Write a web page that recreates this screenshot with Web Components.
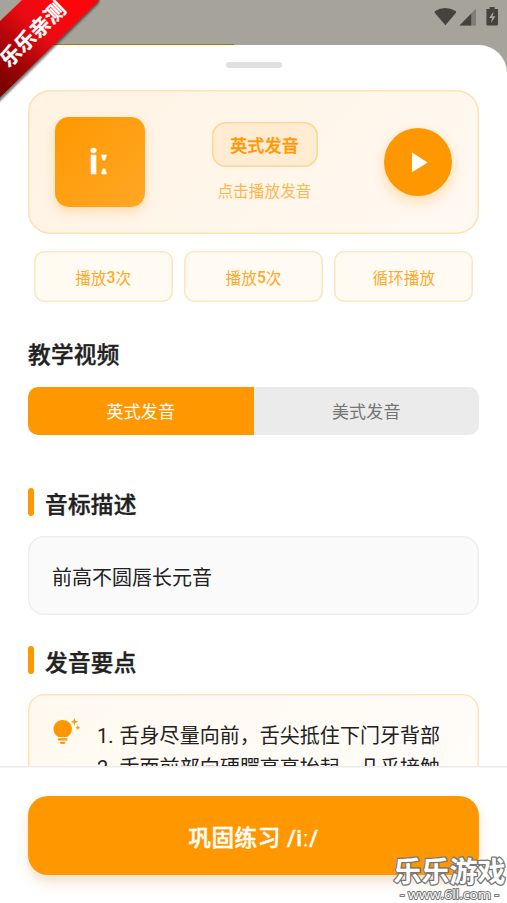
<!DOCTYPE html>
<html lang="zh-CN">
<head>
<meta charset="utf-8">
<title>音标发音</title>
<style>
html,body{margin:0;height:100%;overflow:hidden}
body{font-family:Roboto,"Noto Sans CJK SC",sans-serif;color:#212121;background:#a6a39b}
</style>
</head>
<body>
<phonetic-app></phonetic-app>
<script>
const define = (name, html) => customElements.define(name, class extends HTMLElement {
  constructor() {
    super();
    this.attachShadow({ mode: 'open' }).innerHTML = html;
  }
});

define('status-bar', `
<style>
:host{display:flex;height:45px;box-sizing:border-box;justify-content:flex-end;align-items:flex-start;padding:6px 8px 0 0;background:linear-gradient(#b37109,#b37109) 30px 43.5px/204px 2px no-repeat #a6a39b}
svg{display:block}
</style>
<svg width="66" height="21" viewBox="433 6 66 21">
<path fill="#44433e" d="M434.7 11.2Q445 4.6 456 11.2V12.8L445.4 25.2 434.7 12.8Z"/>
<path fill="#7f7d77" d="M476 8.6V25.5H459.5Z"/><path fill="#44433e" d="M471.2 13.8V25.5H459.5Z"/>
<path fill="#44433e" d="M489.6 7h5v2h3.4v15.2q0 1.2-1.2 1.2h-9.2q-1.2 0-1.2-1.2V9h3.2z"/>
<path fill="#a6a39b" d="M493.5 11.5 489.2 18H492L491 23 495.5 16.3H492.6Z"/>
</svg>`);

define('sound-tile', `
<style>
:host{display:flex;flex:none;box-sizing:border-box;width:90px;height:90px;border-radius:14px;align-items:center;justify-content:center;color:#fff;font:700 35px/1 Roboto,sans-serif;-webkit-text-stroke:.3px;padding-right:1px;background:linear-gradient(135deg,#ff9800,#ffa726);box-shadow:0 5px 12px rgba(255,152,0,.25)}
</style><slot></slot>`);

define('accent-badge', `
<style>
:host{display:flex;box-sizing:border-box;width:106px;height:45px;align-items:center;justify-content:center;box-shadow:inset 0 0 0 1.5px #ffd597;border-radius:14px;background:#ffecd2;color:#ff9800;font-size:17px;font-weight:500;-webkit-text-stroke:.3px;letter-spacing:.15px}
</style><slot></slot>`);

define('play-button', `
<style>
:host{display:flex;flex:none;width:68px;height:68px;border-radius:50%;align-items:center;justify-content:center;background:#ff9800;box-shadow:0 5px 14px rgba(255,152,0,.3)}
</style><svg width="68" height="68" viewBox="0 0 68 68"><path fill="#fff" d="M28 24.6V44.2L43.6 34.4Z"/></svg>`);

define('player-card', `
<style>
:host{display:flex;box-sizing:border-box;height:144px;padding:0 27px;justify-content:space-between;align-items:center;box-shadow:inset 0 0 0 1.6px #ffe1b6;border-radius:22px;background:linear-gradient(135deg,#fff3e3,#fff9f2)}
.info{display:flex;flex-direction:column;align-items:center;gap:13px;padding-top:2px}
.hint{height:24px;line-height:24px;font-size:15.7px;color:#ffb64d}
</style>
<sound-tile><slot name="symbol"></slot></sound-tile>
<div class="info"><accent-badge><slot name="accent"></slot></accent-badge><div class="hint"><slot name="hint"></slot></div></div>
<play-button></play-button>`);

define('repeat-button', `
<style>
:host{display:flex;flex:1;box-sizing:border-box;height:51px;align-items:center;justify-content:center;box-shadow:inset 0 0 0 1.6px #ffe5c2;border-radius:10px;background:#fffaf2;color:#ffa92c;font-size:15.7px;padding-top:1px}
::slotted(b){font-weight:500}
</style><slot></slot>`);

define('tab-item', `
<style>
:host{display:flex;flex:1;box-sizing:border-box;align-items:center;justify-content:center;background:#ebebeb;color:#757575;font-size:17px;letter-spacing:.15px;padding-bottom:1px}
:host([active]){background:#ff9800;color:#fff}
</style><slot></slot>`);

define('tab-strip', `
<style>
:host{display:flex;height:48px;border-radius:10px;overflow:hidden}
</style><slot></slot>`);

define('section-title', `
<style>
:host{display:flex;height:28px;align-items:center;gap:11px;font-size:22.6px;font-weight:500;-webkit-text-stroke:.4px;letter-spacing:.3px;line-height:28px}
:host([marked])::before{content:"";width:6px;height:28px;border-radius:3px;background:#ff9800;flex:none}
span{padding-top:8px}
:host(:not([marked])) span{padding-top:2px}
</style><span><slot></slot></span>`);

define('description-box', `
<style>
:host{display:flex;box-sizing:border-box;height:79px;align-items:center;padding:2px 24px 0;box-shadow:inset 0 0 0 1.5px #eee;border-radius:16px;background:#fafafa;font-size:20px}
</style><slot></slot>`);

define('tips-card', `
<style>
:host{display:flex;box-sizing:border-box;height:180px;padding:23px 20px 0 24px;box-shadow:inset 0 0 0 1.6px #ffe3bc;border-radius:16px;background:linear-gradient(135deg,#fff9f0,#fffdfa);font-size:20px;line-height:32px}
svg{flex:none;width:30px;height:30px;margin-right:15px}
div{padding-top:3px;white-space:nowrap;word-spacing:1px;letter-spacing:.03px}
</style>
<svg viewBox="52 717 30 30"><g fill="#ff9800"><path d="M62.7 720a9 9 0 0 1 4.7 16.8V737H58v-.2A9 9 0 0 1 62.7 720ZM58 738.3h9.4v2.3H58zM59.7 741.7h6q-.4 2.2-2 2.2h-2q-1.6 0-2-2.2zM74.4 718l1 2.7 2.7 1-2.7 1-1 2.8-1-2.8-2.7-1 2.7-1zM77.8 725.3l.8 1.7 1.7.8-1.7.8-.8 1.7-.8-1.7-1.7-.8 1.7-.8z"/></g></svg>
<div><slot></slot></div>`);

define('practice-footer', `
<style>
:host{display:block;box-sizing:border-box;flex:none;height:137px;padding:30px 28px 0;box-shadow:inset 0 1.6px #ebebeb;background:#fff;z-index:1}
button{display:flex;width:100%;height:79px;border:0;border-radius:20px;align-items:center;justify-content:center;padding:6px 0 0;background:#ff9800;color:#fff;font:500 22.6px/30px Roboto,"Noto Sans CJK SC",sans-serif;-webkit-text-stroke:.4px;letter-spacing:.5px;box-shadow:0 7px 14px -2px rgba(190,120,20,.28)}
</style><button><slot></slot></button>`);

define('corner-ribbon', `
<style>
:host{display:block;position:absolute;left:0;top:0;width:106px;height:106px;overflow:hidden}
svg{display:block}
</style>
<svg width="106" height="106" viewBox="0 0 106 106"><defs><linearGradient id="r" gradientUnits="userSpaceOnUse" x1="0" y1="85" x2="75" y2="8"><stop offset="0" stop-color="#7b0000"/><stop offset=".3" stop-color="#a60508"/><stop offset=".62" stop-color="#e90b12"/><stop offset="1" stop-color="#ff050b"/></linearGradient><filter id="s"><feGaussianBlur stdDeviation="1.2"/></filter></defs>
<path filter="url(#s)" fill="#222" opacity=".65" d="M-5 101 99-3V3L-5 106Z"/>
<path fill="url(#r)" d="M22 0H99.5L0 97.5V21Z"/>
<text transform="translate(33 34.5) rotate(-44.5)" text-anchor="middle" y="7" fill="#fff" stroke="#fff" stroke-width=".3" font-family="Noto Sans CJK SC,sans-serif" font-weight="700" font-size="20.5">乐乐亲测</text></svg>`);

define('site-mark', `
<style>
:host{display:block;position:absolute;right:0;bottom:0;width:116px;height:50px;z-index:3}
svg{display:block}
text{fill:#fff;stroke:#777;paint-order:stroke;stroke-linejoin:round}
</style>
<svg width="116" height="50" viewBox="391 853 116 50">
<text x="393.5" y="881.5" font-family="Noto Sans CJK SC,sans-serif" font-weight="700" font-size="28" stroke-width="2.6" textLength="112" lengthAdjust="spacingAndGlyphs">乐乐游戏</text>
<text x="400" y="898.5" font-family="Open Sans,sans-serif" font-size="13.5" font-weight="400" stroke-width="2" textLength="99" lengthAdjust="spacingAndGlyphs">- www.6ll.com -</text></svg>`);

define('bottom-sheet', `
<style>
:host{display:flex;flex-direction:column;flex:1;min-height:0;border-radius:0 28px 0 0;background:#fff;overflow:hidden}
main{flex:1;min-height:0;overflow:hidden;padding:17px 28px 0}
.handle{width:56px;height:6px;border-radius:3px;background:#e0e0e0;margin:0 auto 22px}
.repeats{display:flex;gap:11px;padding:0 5.5px;margin:17px 0 38.5px}
.video{margin-bottom:18px}
tab-strip{margin-bottom:53px}
description-box{margin:20px 0 31px}
tips-card{margin-top:20px}
</style>
<main>
<div class="handle"></div>
<player-card><span slot="symbol">iː</span><span slot="accent">英式发音</span><span slot="hint">点击播放发音</span></player-card>
<div class="repeats"><repeat-button>播放<b>3</b>次</repeat-button><repeat-button>播放<b>5</b>次</repeat-button><repeat-button>循环播放</repeat-button></div>
<section-title class="video">教学视频</section-title>
<tab-strip><tab-item active>英式发音</tab-item><tab-item>美式发音</tab-item></tab-strip>
<section-title marked>音标描述</section-title>
<description-box>前高不圆唇长元音</description-box>
<section-title marked>发音要点</section-title>
<tips-card>1. 舌身尽量向前，舌尖抵住下门牙背部<br>2. 舌面前部向硬腭高高抬起，几乎接触</tips-card>
</main>
<practice-footer>巩固练习 /iː/</practice-footer>`);

define('phonetic-app', `
<style>
:host{display:flex;flex-direction:column;position:relative;height:100vh;overflow:hidden}
</style>
<status-bar></status-bar><bottom-sheet></bottom-sheet><corner-ribbon></corner-ribbon><site-mark></site-mark>`);
</script>
</body>
</html>
